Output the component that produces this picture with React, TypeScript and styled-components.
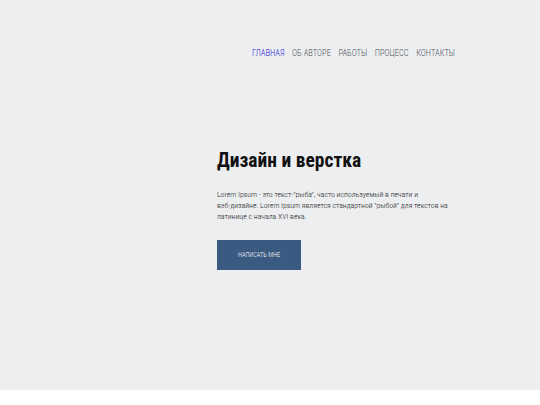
import * as React from 'react';
import styled, { createGlobalStyle } from 'styled-components';

const GlobalStyle = createGlobalStyle`
  html, body {
    margin: 0;
    padding: 0;
    background: #ffffff;
  }
  body {
    font-family: "Roboto Condensed", "Liberation Sans Narrow", "Liberation Sans", Arial, sans-serif;
    font-weight: 300;
  }
`;

const Page = styled.div`
  height: 390px;
  background: #edeef0;
  display: flex;
  flex-direction: column;
`;

const Container = styled.div`
  width: 238px;
  margin-left: 217px;
`;

const Header = styled.header`
  padding-top: 46px;
  display: flex;
  justify-content: flex-end;
`;

const Nav = styled.nav`
  display: flex;
  gap: 7.5px;
`;

const NavLink = styled.a<{ $active?: boolean }>`
  font-size: 8.5px;
  line-height: 14px;
  color: ${p => (p.$active ? '#2323d8' : '#50555c')};
  text-decoration: none;
  white-space: nowrap;
`;

const Hero = styled.section`
  padding-top: 89px;
`;

const Title = styled.h1`
  margin: 0;
  font-size: 19.5px;
  line-height: 23px;
  font-weight: 700;
  color: #111;
`;

const Text = styled.p`
  width: 238px;
  margin: 17px 0 0;
  font-size: 7.8px;
  line-height: 11px;
  color: #222;
`;

// keeps "вэб-дизайне." from breaking at the hyphen
const NoWrap = styled.span`
  white-space: nowrap;
`;

const Button = styled.button`
  margin-top: 18px;
  width: 84px;
  height: 30px;
  border: none;
  background: #3b5a82;
  color: #fff;
  font-family: inherit;
  font-weight: 300;
  font-size: 6.4px;
  cursor: pointer;
`;

const links = ['ГЛАВНАЯ', 'ОБ АВТОРЕ', 'РАБОТЫ', 'ПРОЦЕСС', 'КОНТАКТЫ'];

export default function App() {
  return (
    <>
      <GlobalStyle />
      <Page>
        <Container>
          <Header>
            <Nav>
              {links.map((l, i) => (
                <NavLink key={l} href="#" $active={i === 0}>{l}</NavLink>
              ))}
            </Nav>
          </Header>
          <Hero>
            <Title>Дизайн и верстка</Title>
            <Text>
              Lorem Ipsum - это текст-"рыба", часто используемый в печати и{' '}
              <NoWrap>вэб-дизайне.</NoWrap> Lorem Ipsum является стандартной "рыбой" для текстов на
              латинице с начала XVI века.
            </Text>
            <Button>НАПИСАТЬ МНЕ</Button>
          </Hero>
        </Container>
      </Page>
    </>
  );
}
